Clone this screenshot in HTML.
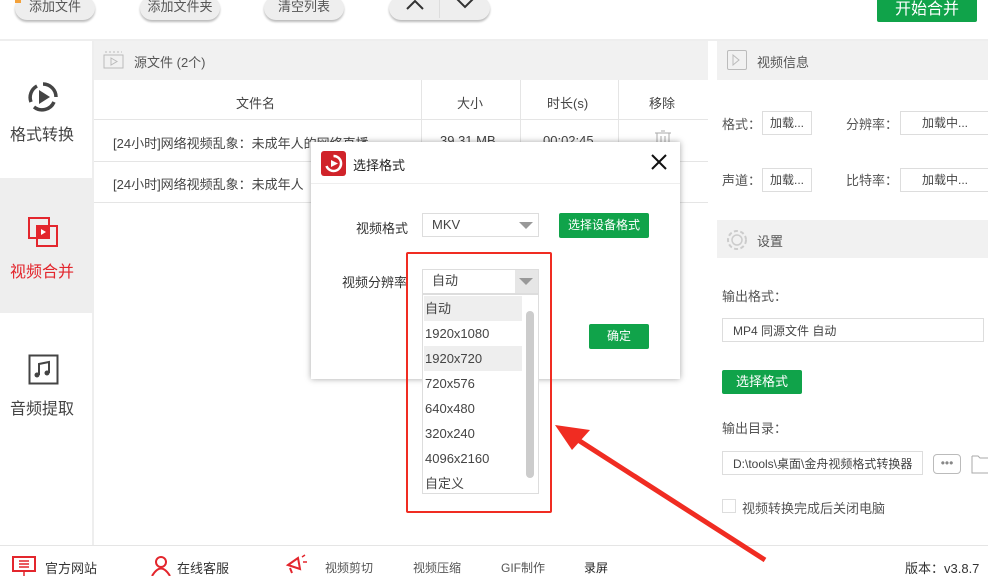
<!DOCTYPE html>
<html><head><meta charset="utf-8"><style>
*{box-sizing:border-box;margin:0;padding:0}
body{width:988px;height:576px;overflow:hidden;background:#fff;font-family:"Liberation Sans","Noto Sans CJK SC",sans-serif;color:#333;font-size:13px;position:relative}
.a{position:absolute}
.btn{position:absolute;height:24px;top:-4px;border-radius:12px;background:#eee;box-shadow:0 2px 2px #bbb;font-size:13px;color:#555;text-align:center;line-height:22px}
.gh{background:#f1f1f1}
.t{white-space:nowrap}
.box{position:absolute;border:1px solid #ddd;background:#fff;font-size:12px;color:#444;text-align:center;line-height:22px;height:24px}
.green{position:absolute;background:#10a34a;color:#fff;text-align:center;border-radius:2px}
.li{position:absolute;left:1px;width:98px;height:25px;line-height:25px;font-size:13px;color:#444;padding-left:1px}
</style></head><body>
<div class="btn" style="left:15px;width:80px">添加文件</div>
<div class="a" style="left:15px;top:0;width:6px;height:3px;background:#f3a13a"></div>
<div class="btn" style="left:140px;width:80px">添加文件夹</div>
<div class="btn" style="left:264px;width:80px">清空列表</div>
<div class="btn" style="left:389px;width:101px"><span style="position:absolute;left:50px;top:0;width:1px;height:22px;background:#ddd"></span>
<svg class="a" style="left:16px;top:2px" width="20" height="14"><path d="M2 11 L10 3 L18 11" stroke="#333" stroke-width="2" fill="none"/></svg>
<svg class="a" style="left:66px;top:0px" width="20" height="14"><path d="M2 3 L10 11 L18 3" stroke="#333" stroke-width="2" fill="none"/></svg></div>
<div class="green" style="left:877px;top:-2px;width:100px;height:24px;line-height:24px;font-size:16px">开始合并</div>
<div class="a" style="left:0;top:39px;width:988px;height:2px;background:#eee"></div>
<div class="a" style="left:92px;top:41px;width:2px;height:505px;background:#eee"></div>
<div class="a" style="left:0;top:178px;width:92px;height:135px;background:#eee"></div>
<svg class="a" style="left:26px;top:80px" width="34" height="34" viewBox="0 0 34 34"><path d="M17 4 A13 13 0 0 1 30 17" stroke="#444" stroke-width="3.5" fill="none"/><path d="M28 22 A13 13 0 0 1 8 27" stroke="#444" stroke-width="3.5" fill="none"/><path d="M5 22 A13 13 0 0 1 11 6" stroke="#444" stroke-width="3.5" fill="none"/><path d="M13 10 L24 17 L13 24Z" fill="#444"/></svg>
<div class="a t" style="left:10px;top:121px;font-size:16px;color:#444">格式转换</div>
<svg class="a" style="left:27px;top:216px" width="32" height="32"><rect x="2" y="2" width="20" height="20" fill="none" stroke="#e3262d" stroke-width="2"/><rect x="10" y="10" width="20" height="20" fill="none" stroke="#e3262d" stroke-width="2"/><rect x="10" y="10" width="12" height="12" fill="#e3262d"/><path d="M14 13 L19 16 L14 19Z" fill="#fff"/></svg>
<div class="a t" style="left:10px;top:258px;font-size:16px;color:#e3262d">视频合并</div>
<svg class="a" style="left:28px;top:354px" width="32" height="32"><rect x="1.5" y="1.5" width="28" height="28" fill="none" stroke="#444" stroke-width="2"/><path d="M11 21 V10 L21 8 V19" stroke="#444" stroke-width="2" fill="none"/><circle cx="9" cy="21" r="2.5" fill="#444"/><circle cx="19" cy="19" r="2.5" fill="#444"/></svg>
<div class="a t" style="left:10px;top:395px;font-size:16px;color:#444">音频提取</div>
<div class="a gh" style="left:94px;top:41px;width:614px;height:39px"></div>
<svg class="a" style="left:103px;top:50px" width="22" height="20"><rect x="1" y="5" width="19" height="13" fill="none" stroke="#bbb"/><path d="M8 8 L14 11.5 L8 15Z" fill="none" stroke="#bbb"/><path d="M2 2 H19" stroke="#bbb" stroke-dasharray="2 2"/></svg>
<div class="a t" style="left:134px;top:52px;color:#555">源文件 (2个)</div>
<div class="a" style="left:94px;top:119px;width:614px;height:1px;background:#e5e5e5"></div>
<div class="a" style="left:94px;top:161px;width:614px;height:1px;background:#e5e5e5"></div>
<div class="a" style="left:94px;top:202px;width:614px;height:1px;background:#e5e5e5"></div>
<div class="a" style="left:421px;top:80px;width:1px;height:82px;background:#e5e5e5"></div>
<div class="a" style="left:520px;top:80px;width:1px;height:82px;background:#e5e5e5"></div>
<div class="a" style="left:618px;top:80px;width:1px;height:82px;background:#e5e5e5"></div>
<div class="a t" style="left:236px;top:93px;color:#444">文件名</div>
<div class="a t" style="left:457px;top:93px;color:#444">大小</div>
<div class="a t" style="left:547px;top:93px;color:#444">时长(s)</div>
<div class="a t" style="left:649px;top:93px;color:#444">移除</div>
<div class="a t" style="left:113px;top:133px;color:#444">[24小时]网络视频乱象：未成年人的网络直播</div>
<div class="a t" style="left:440px;top:133px;color:#444">39.31 MB</div>
<div class="a t" style="left:543px;top:133px;color:#444">00:02:45</div>
<svg class="a" style="left:654px;top:130px" width="18" height="14"><path d="M1 3 H17 M7 1 H11 M3 3 V14 H15 V3 M7 6 V12 M11 6 V12" stroke="#aaa" fill="none"/></svg>
<div class="a t" style="left:113px;top:174px;color:#444">[24小时]网络视频乱象：未成年人</div>
<div class="a gh" style="left:717px;top:41px;width:271px;height:39px"></div>
<div class="a" style="left:727px;top:50px;width:20px;height:20px;border:1px solid #bbb;border-radius:2px"></div>
<svg class="a" style="left:730px;top:54px" width="12" height="12"><path d="M3 1 L9 6 L3 11Z" fill="none" stroke="#bbb"/></svg>
<div class="a t" style="left:757px;top:52px;color:#555">视频信息</div>
<div class="a t" style="left:722px;top:114px;color:#555">格式：</div>
<div class="box" style="left:762px;top:111px;width:50px">加载...</div>
<div class="a t" style="left:846px;top:114px;color:#555">分辨率：</div>
<div class="box" style="left:900px;top:111px;width:90px">加载中...</div>
<div class="a t" style="left:722px;top:170px;color:#555">声道：</div>
<div class="box" style="left:762px;top:168px;width:50px">加载...</div>
<div class="a t" style="left:846px;top:170px;color:#555">比特率：</div>
<div class="box" style="left:900px;top:168px;width:90px">加载中...</div>
<div class="a gh" style="left:717px;top:220px;width:271px;height:38px"></div>
<svg class="a" style="left:725px;top:228px" width="24" height="24"><circle cx="12" cy="12" r="5" fill="none" stroke="#ccc" stroke-width="1.5"/><circle cx="12" cy="12" r="9" fill="none" stroke="#ccc" stroke-width="2" stroke-dasharray="4 2.5"/></svg>
<div class="a t" style="left:757px;top:231px;color:#555">设置</div>
<div class="a t" style="left:722px;top:286px;color:#555">输出格式：</div>
<div class="box" style="left:722px;top:318px;width:262px;text-align:left;padding-left:10px;line-height:24px">MP4 同源文件 自动</div>
<div class="green" style="left:722px;top:370px;width:80px;height:24px;line-height:24px;font-size:13px">选择格式</div>
<div class="a t" style="left:722px;top:418px;color:#555">输出目录：</div>
<div class="box" style="left:722px;top:451px;width:201px;text-align:left;padding-left:10px;line-height:24px;overflow:hidden">D:\tools\桌面\金舟视频格式转换器</div>
<div class="box" style="left:933px;top:454px;width:28px;height:20px;line-height:16px;border-radius:4px;border-color:#bbb;color:#888">•••</div>
<svg class="a" style="left:971px;top:452px" width="20" height="22"><path d="M1 4 H7 L9 6 H20 M1 4 V21 H20" stroke="#aaa" fill="none"/></svg>
<div class="a" style="left:722px;top:499px;width:14px;height:14px;border:1px solid #ddd"></div>
<div class="a t" style="left:742px;top:498px;color:#555">视频转换完成后关闭电脑</div>
<div class="a" style="left:0;top:545px;width:988px;height:1px;background:#e5e5e5"></div>
<svg class="a" style="left:11px;top:555px" width="28" height="21"><rect x="2" y="2" width="22" height="14" fill="none" stroke="#e3262d" stroke-width="2"/><path d="M8 6 H18 M8 9 H18 M8 12 H18 M13 16 V21" stroke="#e3262d" stroke-width="1.5"/></svg>
<div class="a t" style="left:45px;top:558px;color:#333">官方网站</div>
<svg class="a" style="left:150px;top:555px" width="22" height="21"><circle cx="11" cy="7" r="5" fill="none" stroke="#e3262d" stroke-width="2"/><path d="M2 21 Q11 6 20 21" fill="none" stroke="#e3262d" stroke-width="2"/></svg>
<div class="a t" style="left:177px;top:558px;color:#333">在线客服</div>
<svg class="a" style="left:284px;top:553px" width="24" height="22"><path d="M4 12 L14 5 L16 16 Z M6 15 L8 20" fill="none" stroke="#e3262d" stroke-width="2"/><path d="M18 4 L21 2 M19 9 H23" stroke="#e3262d" stroke-width="1.5"/></svg>
<div class="a t" style="left:325px;top:559px;font-size:12px;color:#555">视频剪切</div>
<div class="a t" style="left:413px;top:559px;font-size:12px;color:#555">视频压缩</div>
<div class="a t" style="left:501px;top:559px;font-size:12px;color:#555">GIF制作</div>
<div class="a t" style="left:584px;top:559px;font-size:12px;color:#222">录屏</div>
<div class="a t" style="left:905px;top:558px;color:#333">版本：v3.8.7</div>
<div class="a" style="left:311px;top:142px;width:369px;height:237px;background:#fff;box-shadow:0 0 6px rgba(0,0,0,.35)"></div>
<div class="a" style="left:311px;top:183px;width:369px;height:1px;background:#eee"></div>
<svg class="a" style="left:321px;top:151px" width="25" height="25"><rect width="25" height="25" rx="3" fill="#d0232a"/><path d="M12.5 5 A7.5 7.5 0 1 1 5.5 15" stroke="#fff" stroke-width="2.5" fill="none"/><path d="M10 9 L17 12.5 L10 16Z" fill="#fff"/></svg>
<div class="a t" style="left:353px;top:155px;font-size:13px;color:#222">选择格式</div>
<svg class="a" style="left:651px;top:154px" width="16" height="16"><path d="M1 1 L15 15 M15 1 L1 15" stroke="#111" stroke-width="2"/></svg>
<div class="a t" style="left:356px;top:218px;color:#333">视频格式</div>
<div class="box" style="left:422px;top:213px;width:117px;text-align:left;padding-left:9px;font-size:13px">MKV</div>
<svg class="a" style="left:519px;top:222px" width="14" height="8"><path d="M0 0 H14 L7 7Z" fill="#999"/></svg>
<div class="green" style="left:559px;top:213px;width:90px;height:25px;line-height:25px;font-size:12px">选择设备格式</div>
<div class="green" style="left:589px;top:324px;width:60px;height:25px;line-height:25px;font-size:12px">确定</div>
<div class="a t" style="left:342px;top:272px;color:#333">视频分辨率</div>
<div class="box" style="left:422px;top:269px;width:117px;height:25px;text-align:left;padding-left:9px;font-size:13px">自动</div>
<div class="a" style="left:515px;top:270px;width:23px;height:23px;background:#e6e6e6"></div>
<svg class="a" style="left:519px;top:278px" width="14" height="8"><path d="M0 0 H14 L7 7Z" fill="#999"/></svg>
<div class="a" style="left:422px;top:294px;width:117px;height:200px;background:#fff;border:1px solid #ddd">
<div class="li" style="top:1px;background:#eee">自动</div>
<div class="li" style="top:26px">1920x1080</div>
<div class="li" style="top:51px;background:#eee">1920x720</div>
<div class="li" style="top:76px">720x576</div>
<div class="li" style="top:101px">640x480</div>
<div class="li" style="top:126px">320x240</div>
<div class="li" style="top:151px">4096x2160</div>
<div class="li" style="top:176px">自定义</div>
<div class="a" style="left:103px;top:16px;width:8px;height:167px;border-radius:4px;background:#ccc"></div>
</div>
<div class="a" style="left:406px;top:252px;width:146px;height:261px;border:2px solid #f02c22;border-radius:2px"></div>
<svg class="a" style="left:0;top:0" width="988" height="576"><path d="M765 560 L575 438" stroke="#f02c22" stroke-width="5"/><path d="M555 425 L590 430 L572 450Z" fill="#f02c22"/></svg>
</body></html>
